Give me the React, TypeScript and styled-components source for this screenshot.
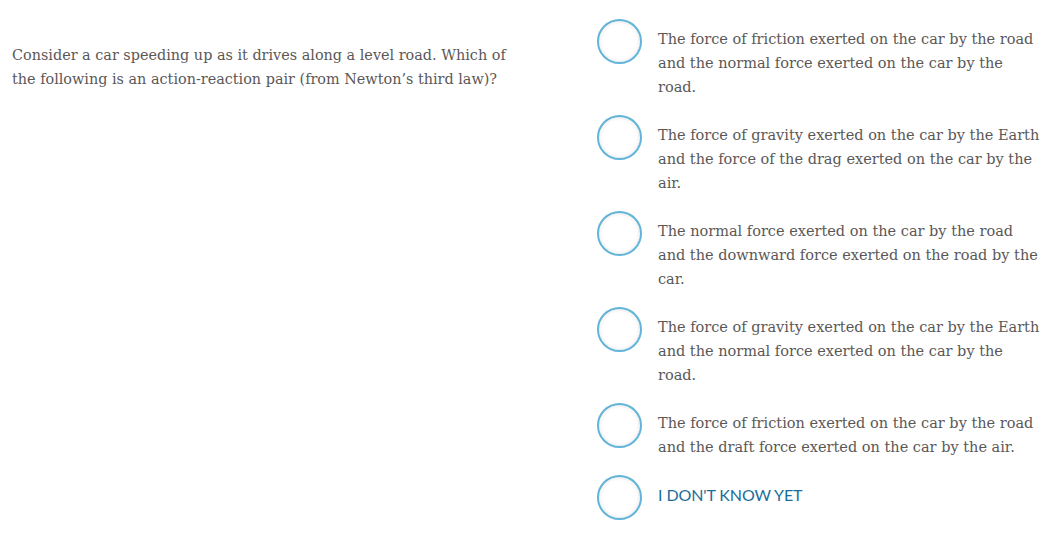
import React from "react";
import styled, { createGlobalStyle } from "styled-components";

const GlobalStyle = createGlobalStyle`
  html, body {
    margin: 0;
    padding: 0;
    background: #ffffff;
  }
  body {
    font-family: "DejaVu Serif", serif;
  }
`;

const Page = styled.div`
  display: grid;
  grid-template-columns: 585px 1fr;
  padding: 19px 16px 0 12px;
  box-sizing: border-box;
  width: 1059px;
`;

const Question = styled.p`
  margin: 24px 0 0 0;
  width: 505px;
  font-family: "DejaVu Serif", serif;
  font-size: 14.4px;
  line-height: 24px;
  color: #5b5858;
`;

const OptionList = styled.div`
  display: flex;
  flex-direction: column;
  gap: 16px;
`;

const Option = styled.label`
  display: flex;
  align-items: flex-start;
  gap: 16px;
  cursor: pointer;
`;

const Radio = styled.span`
  flex: 0 0 auto;
  width: 45px;
  height: 45px;
  box-sizing: border-box;
  border-radius: 50%;
  border: 2px solid #62b4d8;
  background: #ffffff;
  box-shadow: inset 0 0 4px rgba(0, 0, 0, 0.12);
`;

const OptionText = styled.span<{ $unknown?: boolean }>`
  display: block;
  width: 385px;
  padding-top: ${(p) => (p.$unknown ? "10px" : "8px")};
  font-family: ${(p) => (p.$unknown ? `"Lato", sans-serif` : `"DejaVu Serif", serif`)};
  font-size: ${(p) => (p.$unknown ? "16px" : "14.5px")};
  line-height: ${(p) => (p.$unknown ? "20px" : "24px")};
  color: ${(p) => (p.$unknown ? "#1b6d99" : "#5b5858")};
  text-transform: ${(p) => (p.$unknown ? "uppercase" : "none")};
  letter-spacing: ${(p) => (p.$unknown ? "-0.1px" : "0")};
`;

const options = [
  "The force of friction exerted on the car by the road and the normal force exerted on the car by the road.",
  "The force of gravity exerted on the car by the Earth and the force of the drag exerted on the car by the air.",
  "The normal force exerted on the car by the road and the downward force exerted on the road by the car.",
  "The force of gravity exerted on the car by the Earth and the normal force exerted on the car by the road.",
  "The force of friction exerted on the car by the road and the draft force exerted on the car by the air.",
];

export default function App() {
  return (
    <>
      <GlobalStyle />
      <Page>
        <Question>
          Consider a car speeding up as it drives along a level road. Which of
          the following is an action-reaction pair (from Newton’s third law)?
        </Question>
        <OptionList>
          {options.map((o) => (
            <Option key={o}>
              <Radio />
              <OptionText>{o}</OptionText>
            </Option>
          ))}
          <Option>
            <Radio />
            <OptionText $unknown>I don't know yet</OptionText>
          </Option>
        </OptionList>
      </Page>
    </>
  );
}
